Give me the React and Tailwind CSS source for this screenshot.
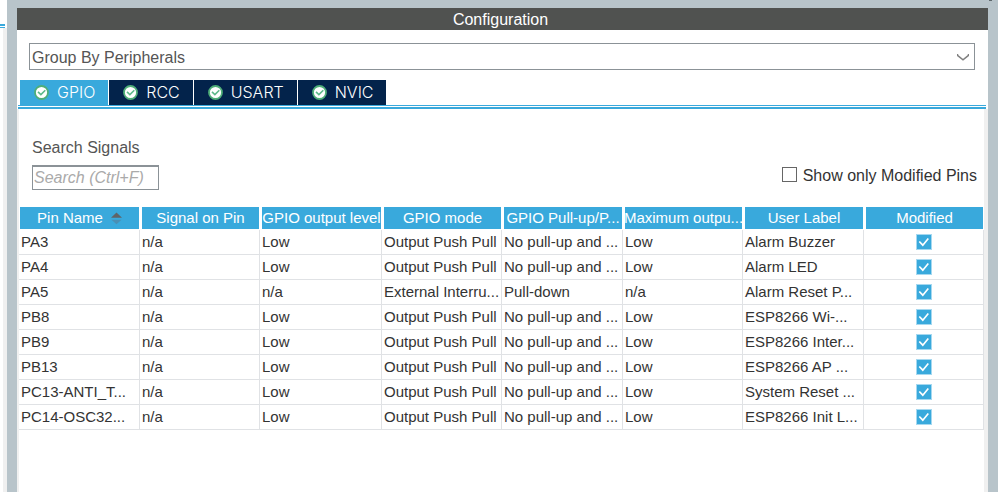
import { useState } from "react";

const TABS = ["GPIO", "RCC", "USART", "NVIC"];

const COLUMNS = [
  { label: "Pin Name", width: "w-[121px]", sorted: true },
  { label: "Signal on Pin", width: "w-[120px]" },
  { label: "GPIO output level", width: "w-[122px]" },
  { label: "GPIO mode", width: "w-[120px]" },
  { label: "GPIO Pull-up/Pull-down", short: "GPIO Pull-up/P...", width: "w-[121px]" },
  { label: "Maximum output speed", short: "Maximum outpu...", width: "w-[120px]" },
  { label: "User Label", width: "w-[121px]" },
  { label: "Modified", width: "w-[120px]" },
];

const PP = "Output Push Pull";
const NP = "No pull-up and ...";

const ROWS = [
  ["PA3", "n/a", "Low", PP, NP, "Low", "Alarm Buzzer"],
  ["PA4", "n/a", "Low", PP, NP, "Low", "Alarm LED"],
  ["PA5", "n/a", "n/a", "External Interru...", "Pull-down", "n/a", "Alarm Reset P..."],
  ["PB8", "n/a", "Low", PP, NP, "Low", "ESP8266 Wi-..."],
  ["PB9", "n/a", "Low", PP, NP, "Low", "ESP8266 Inter..."],
  ["PB13", "n/a", "Low", PP, NP, "Low", "ESP8266 AP ..."],
  ["PC13-ANTI_T...", "n/a", "Low", PP, NP, "Low", "System Reset ..."],
  ["PC14-OSC32...", "n/a", "Low", PP, NP, "Low", "ESP8266 Init L..."],
];

function StatusIcon() {
  return (
    <svg viewBox="0 0 15 15" className="size-[15px] shrink-0" aria-hidden="true">
      <circle cx="7.5" cy="7.5" r="6.5" fill="#fff" stroke="#4fae78" strokeWidth="1.8" />
      <path d="M4 6.8 6.9 9.6l4.4-4.4" fill="none" stroke="#5db98a" strokeWidth="1.6" />
    </svg>
  );
}

function SortIcon() {
  return (
    <svg viewBox="0 0 11 13" className="h-[13px] w-[11px] shrink-0" aria-hidden="true">
      <path d="M5.5 0.5 11 5.8H0z" fill="#5f6468" />
      <path d="M0.5 7.8h10L5.5 12.3z" fill="#4a8fb5" />
    </svg>
  );
}

function ModifiedBox({ name, checked, onChange }) {
  return (
    <label className="relative mx-auto block size-4">
      <input
        type="checkbox"
        aria-label={`${name} modified`}
        checked={checked}
        onChange={onChange}
        className="block size-4 appearance-none border border-[#a5d8f0] bg-white checked:bg-[#39a9dc]"
      />
      {checked && (
        <svg viewBox="0 0 16 16" className="pointer-events-none absolute inset-0 size-4" aria-hidden="true">
          <path d="M3.3 7.5 6.8 11.2 12.3 4.5" fill="none" stroke="#fff" strokeWidth="1.7" />
        </svg>
      )}
    </label>
  );
}

export default function App() {
  const [tab, setTab] = useState("GPIO");
  const [modified, setModified] = useState(ROWS.map(() => true));
  const toggle = (i) => setModified(modified.map((m, j) => (j === i ? !m : m)));

  return (
    <div className="relative flex min-h-screen bg-white font-['Liberation_Sans',Arial,sans-serif] text-base text-[#333]">
      <aside className="flex w-[7px] shrink-0 flex-col pt-6">
        <div className="mr-0.5 h-1 border-t-2 border-b border-[#39a9dc]" />
        <div className="ml-[3px] grow bg-[#f0f0f0]" />
      </aside>
      <main className="flex min-w-0 grow flex-col border-x-[10px] border-t-8 border-[#b8c4ca] bg-white">
        <h1 className="h-[22px] bg-[#505250] pr-1 text-center leading-6 text-white">Configuration</h1>

        <div className="relative mt-[13px] mr-[13px] ml-3">
          <select
            aria-label="Grouping"
            className="block h-[27px] w-full appearance-none border border-[#8b9297] bg-white pt-0.5 pr-8 pl-0.5 leading-[24px] text-[#555]"
          >
            <option>Group By Peripherals</option>
          </select>
          <svg viewBox="0 0 12 7" className="pointer-events-none absolute top-[11px] right-1.5 h-[7px] w-3" aria-hidden="true">
            <path d="M0.5 0v1.4L6 5.8l5.5-4.4V0" fill="none" stroke="#808080" strokeWidth="1.5" />
          </svg>
        </div>

        <div role="tablist" className="mt-2.5 flex gap-px pl-[3px]">
          {TABS.map((t) => (
            <button
              key={t}
              type="button"
              role="tab"
              aria-selected={t === tab}
              onClick={() => setTab(t)}
              className={`flex h-[25px] items-center gap-2 pr-[13px] pb-px pl-3.5 leading-6 text-white ${
                t === tab ? "bg-[#39a9dc]" : "bg-[#03234b]"
              }`}
            >
              <StatusIcon />
              <span className="font-['Inter','Liberation_Sans',sans-serif] font-light">{t}</span>
            </button>
          ))}
        </div>
        <div className="mr-0.5 ml-px h-1 border-t border-b-2 border-[#39a9dc]" />

        <section className="grow border-r-4 border-l-2 border-[#f0f0f0]">
          <div className="flex items-end justify-between pt-[27px] pr-[7px] pl-[13px]">
            <div>
              <label htmlFor="search" className="block leading-6 text-[#555]">Search Signals</label>
              <input
                id="search"
                type="text"
                placeholder="Search (Ctrl+F)"
                className="mt-[5px] block h-[25px] w-[127px] border border-t-2 border-[#8b9297] px-px italic outline-none placeholder:text-[#aaa]"
              />
            </div>
            <label className="flex h-[26px] items-start gap-1.5 leading-6">
              <input type="checkbox" className="mt-[3px] size-[15px] appearance-none border border-[#666] bg-white checked:bg-[#39a9dc]" />
              Show only Modified Pins
            </label>
          </div>

          <table className="mt-[17px] w-full table-fixed border-separate border-spacing-0 text-[15px]">
            <thead>
              <tr className="h-[23px]">
                {COLUMNS.map((c) => (
                  <th
                    key={c.label}
                    title={c.label}
                    className={`${c.width} border-r border-b border-l-2 border-white bg-[#39a9dc] p-0 leading-[22px] font-normal whitespace-nowrap text-white first:border-l`}
                  >
                    <span className="flex items-center justify-center gap-2">
                      {c.short || c.label}
                      {c.sorted && <SortIcon />}
                    </span>
                  </th>
                ))}
              </tr>
            </thead>
            <tbody>
              {ROWS.map((row, i) => (
                <tr key={row[0]} className="h-[25px]">
                  {row.map((cell, j) => (
                    <td key={j} className="overflow-hidden border-r border-b border-[#e0e2e5] p-0 pl-0.5 leading-6 whitespace-nowrap">
                      {cell}
                    </td>
                  ))}
                  <td className="border-r border-b border-[#e0e2e5] p-0">
                    <ModifiedBox name={row[0]} checked={modified[i]} onChange={() => toggle(i)} />
                  </td>
                </tr>
              ))}
            </tbody>
          </table>
        </section>
      </main>
      <div className="w-[3px] shrink-0 bg-white" />
      <span className="absolute top-0 right-[9px] h-px w-[3px] bg-[#5f686c]" />
    </div>
  );
}
